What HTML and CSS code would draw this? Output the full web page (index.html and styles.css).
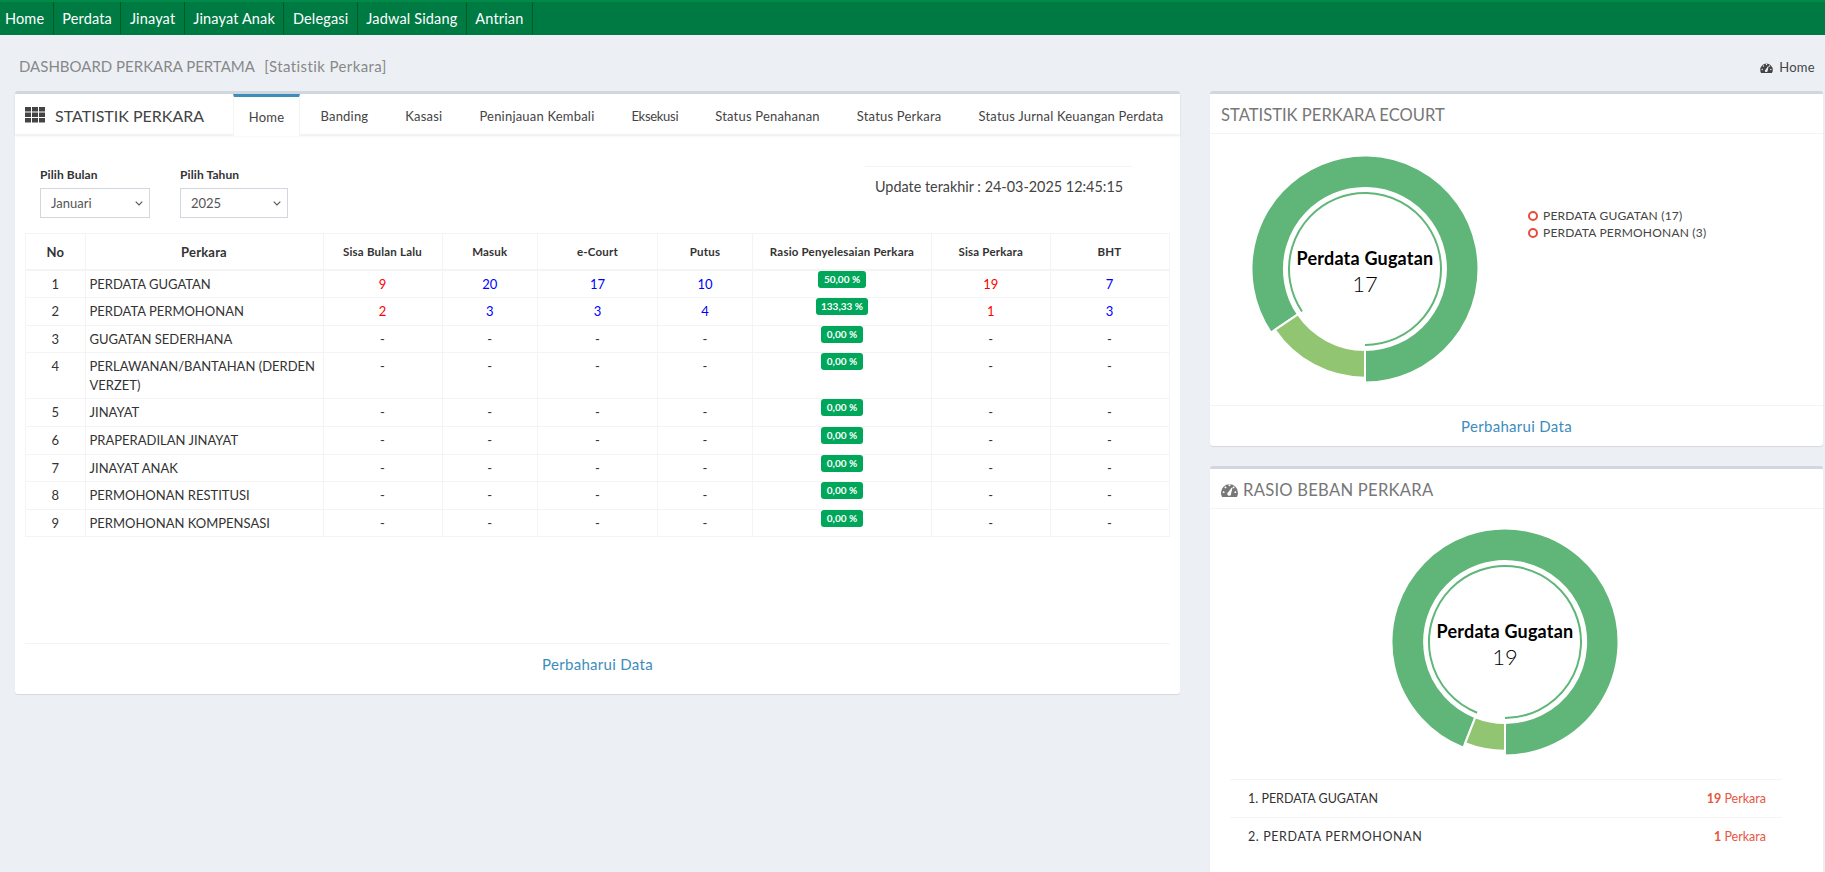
FILE: index.html
```html
<!DOCTYPE html>
<html lang="id">
<head>
<meta charset="utf-8">
<title>Dashboard Perkara Pertama</title>
<link rel="stylesheet" href="styles.css">
</head>
<body>
<nav class="topnav">
  <a class="nav-item nav-first">Home</a>
  <a class="nav-item">Perdata</a>
  <a class="nav-item">Jinayat</a>
  <a class="nav-item">Jinayat Anak</a>
  <a class="nav-item">Delegasi</a>
  <a class="nav-item">Jadwal Sidang</a>
  <a class="nav-item">Antrian</a>
</nav>
<header class="page-head">
  <h1 class="page-title">DASHBOARD PERKARA PERTAMA <span class="page-sub">[Statistik Perkara]</span></h1>
  <div class="crumb">
    <svg class="gauge-sm" viewBox="0 0 16 14"><path fill-rule="evenodd" d="M0 10a8 8 0 0 1 16 0c0 1.500-.4 2.800-1 4H1c-.6-1.200-1-2.500-1-4zM2.500 8.600a.9.9 0 1 0 0 1.800.9.900 0 0 0 0-1.800zM4.200 4.100a.9.9 0 1 0 0 1.800.9.900 0 0 0 0-1.800zM8 2.200a.9.9 0 1 0 0 1.800.9.900 0 0 0 0-1.800zM11.800 4.100a.9.9 0 1 0 0 1.800.9.900 0 0 0 0-1.800zM13.500 8.600a.9.9 0 1 0 0 1.800.9.900 0 0 0 0-1.800zM7 9.400a1.800 1.800 0 1 0 2.500 1.300l1.300-5.200-.9-.2z"/></svg>
    <span>Home</span>
  </div>
</header>
<main class="layout">
  <section class="panel panel-main">
    <div class="tabbar">
      <div class="tabbar-title">
        <svg class="th-icon" viewBox="0 0 20 15.500"><path d="M0 0h6v4.500H0zM7 0h6v4.500H7zM14 0h6v4.500h-6zM0 5.500h6V10H0zM7 5.500h6V10H7zM14 5.500h6V10h-6zM0 11h6v4.500H0zM7 11h6v4.500H7zM14 11h6v4.500h-6z"/></svg>
        <span>STATISTIK PERKARA</span>
      </div>
      <ul class="tabs">
        <li class="tab tab-active">Home</li>
        <li class="tab">Banding</li>
        <li class="tab">Kasasi</li>
        <li class="tab">Peninjauan Kembali</li>
        <li class="tab tab-tight">Eksekusi</li>
        <li class="tab">Status Penahanan</li>
        <li class="tab">Status Perkara</li>
        <li class="tab">Status Jurnal Keuangan Perdata</li>
      </ul>
    </div>
    <div class="panel-main-body">
      <div class="filters">
        <div class="filter filter-month">
          <label class="filter-label">Pilih Bulan</label>
          <select class="filter-select select-month"><option>Januari</option></select>
        </div>
        <div class="filter filter-year">
          <label class="filter-label">Pilih Tahun</label>
          <select class="filter-select select-year"><option>2025</option></select>
        </div>
        <div class="update">Update terakhir : 24-03-2025 12:45:15</div>
      </div>
      <table class="stats">
        <colgroup>
          <col class="c-no"><col class="c-name"><col class="c-a"><col class="c-b"><col class="c-c"><col class="c-d"><col class="c-e"><col class="c-f"><col class="c-g">
        </colgroup>
        <thead>
          <tr><th class="th-big">No</th><th class="th-big">Perkara</th><th>Sisa Bulan Lalu</th><th>Masuk</th><th>e-Court</th><th>Putus</th><th>Rasio Penyelesaian Perkara</th><th>Sisa Perkara</th><th>BHT</th></tr>
        </thead>
        <tbody>
          <tr><td>1</td><td class="name">PERDATA GUGATAN</td><td class="red">9</td><td class="blue">20</td><td class="blue">17</td><td class="blue">10</td><td><span class="badge">50,00 %</span></td><td class="red">19</td><td class="blue">7</td></tr>
          <tr><td>2</td><td class="name">PERDATA PERMOHONAN</td><td class="red">2</td><td class="blue">3</td><td class="blue">3</td><td class="blue">4</td><td><span class="badge">133,33 %</span></td><td class="red">1</td><td class="blue">3</td></tr>
          <tr><td>3</td><td class="name">GUGATAN SEDERHANA</td><td>-</td><td>-</td><td>-</td><td>-</td><td><span class="badge">0,00 %</span></td><td>-</td><td>-</td></tr>
          <tr><td>4</td><td class="name">PERLAWANAN/BANTAHAN (DERDEN VERZET)</td><td>-</td><td>-</td><td>-</td><td>-</td><td><span class="badge">0,00 %</span></td><td>-</td><td>-</td></tr>
          <tr><td>5</td><td class="name">JINAYAT</td><td>-</td><td>-</td><td>-</td><td>-</td><td><span class="badge">0,00 %</span></td><td>-</td><td>-</td></tr>
          <tr><td>6</td><td class="name">PRAPERADILAN JINAYAT</td><td>-</td><td>-</td><td>-</td><td>-</td><td><span class="badge">0,00 %</span></td><td>-</td><td>-</td></tr>
          <tr><td>7</td><td class="name">JINAYAT ANAK</td><td>-</td><td>-</td><td>-</td><td>-</td><td><span class="badge">0,00 %</span></td><td>-</td><td>-</td></tr>
          <tr><td>8</td><td class="name">PERMOHONAN RESTITUSI</td><td>-</td><td>-</td><td>-</td><td>-</td><td><span class="badge">0,00 %</span></td><td>-</td><td>-</td></tr>
          <tr><td>9</td><td class="name">PERMOHONAN KOMPENSASI</td><td>-</td><td>-</td><td>-</td><td>-</td><td><span class="badge">0,00 %</span></td><td>-</td><td>-</td></tr>
        </tbody>
      </table>
      <div class="main-footer"><a class="refresh">Perbaharui Data</a></div>
    </div>
  </section>
  <aside class="side">
    <section class="panel">
      <div class="side-head">STATISTIK PERKARA ECOURT</div>
      <div class="ecourt-body">
        <svg class="donut" viewBox="0 0 240 240">
          <path class="seg-main" d="M25.900 183.500A113.500 113.500 0 1 1 120 233.500L120 201A81 81 0 1 0 52.800 165.300Z"/>
          <path class="seg-light" d="M120 201L120 228.700A108.700 108.700 0 0 1 29.900 180.800L52.800 165.300A81 81 0 0 0 120 201Z"/>
          <path class="seg-hilite" d="M57 162.500A76 76 0 1 1 120 196"/>
          <text class="donut-label" x="120" y="115.500">Perdata Gugatan</text>
          <text class="donut-value" x="120" y="143">17</text>
        </svg>
        <ul class="legend">
          <li class="legend-item"><span class="legend-dot"></span>PERDATA GUGATAN (17)</li>
          <li class="legend-item"><span class="legend-dot"></span>PERDATA PERMOHONAN (3)</li>
        </ul>
      </div>
      <div class="side-foot"><a class="refresh">Perbaharui Data</a></div>
    </section>
    <section class="panel panel-ratio">
      <div class="side-head">
        <svg class="gauge-lg" viewBox="0 0 16 14"><path fill-rule="evenodd" d="M0 10a8 8 0 0 1 16 0c0 1.500-.4 2.800-1 4H1c-.6-1.200-1-2.500-1-4zM2.500 8.600a.9.9 0 1 0 0 1.800.9.900 0 0 0 0-1.800zM4.200 4.100a.9.9 0 1 0 0 1.800.9.900 0 0 0 0-1.800zM8 2.200a.9.9 0 1 0 0 1.800.9.900 0 0 0 0-1.800zM11.800 4.100a.9.9 0 1 0 0 1.800.9.900 0 0 0 0-1.800zM13.500 8.600a.9.9 0 1 0 0 1.800.9.900 0 0 0 0-1.800zM7 9.400a1.800 1.800 0 1 0 2.500 1.300l1.300-5.200-.9-.2z"/></svg>
        <span class="ratio-title">RASIO BEBAN PERKARA</span>
      </div>
      <div class="ratio-body">
        <svg class="donut donut-center" viewBox="0 0 240 240">
          <path class="seg-main" d="M78.400 225.600A113.500 113.500 0 1 1 120 233.500L120 201A81 81 0 1 0 90.300 195.300Z"/>
          <path class="seg-light" d="M120 201L120 228.700A108.700 108.700 0 0 1 80.200 221.100L90.300 195.300A81 81 0 0 0 120 201Z"/>
          <path class="seg-hilite" d="M92.100 190.700A76 76 0 1 1 120 196"/>
          <text class="donut-label" x="120" y="115.500">Perdata Gugatan</text>
          <text class="donut-value" x="120" y="143">19</text>
        </svg>
        <ul class="ratio-list">
          <li class="ratio-row"><span>1. PERDATA GUGATAN</span><span class="ratio-val"><b>19</b> Perkara</span></li>
          <li class="ratio-row"><span class="ratio-long">2. PERDATA PERMOHONAN</span><span class="ratio-val"><b>1</b> Perkara</span></li>
        </ul>
      </div>
    </section>
  </aside>
</main>
</body>
</html>
```
FILE: styles.css
```css
* { box-sizing: border-box; }
html, body { height: 872px; overflow: hidden; }
body {
  margin: 0;
  background: #ecf0f5;
  color: #333;
  font-family: Lato, "Open Sans", "Liberation Sans", sans-serif;
  font-size: 14px;
}
ul { list-style: none; margin: 0; padding: 0; }

.topnav {
  display: flex;
  height: 35px;
  background: #007a43;
  border-top: 2px solid #008a48;
  padding-bottom: 1px;
}
.nav-item {
  display: flex;
  align-items: center;
  padding: 0 8.500px;
  color: #fff;
  font-size: 14.500px;
  letter-spacing: .15px;
  border-right: 1px solid #005c1e;
}
.nav-first { padding-left: 5px; }

.page-head {
  display: flex;
  justify-content: space-between;
  align-items: center;
  height: 56px;
  padding: 6px 10px 0 19px;
}
.page-title {
  margin: 0;
  font-size: 15px;
  font-weight: 400;
  color: #888;
}
.page-sub { margin-left: 6px; letter-spacing: .4px; }
.crumb {
  display: flex;
  align-items: center;
  gap: 6px;
  padding-top: 2px;
  font-size: 13px;
  color: #444;
  letter-spacing: .3px;
}
.gauge-sm { width: 13px; height: 11px; fill: #444; }

.layout {
  display: flex;
  align-items: flex-start;
  gap: 30px;
  padding: 0 2px 0 15px;
}
.panel {
  background: #fff;
  border-top: 3px solid #d2d6de;
  border-radius: 3px;
  box-shadow: 0 1px 1px rgba(0,0,0,.1);
}
.panel-main { width: 1165px; height: 603px; }
.side { width: 613px; display: flex; flex-direction: column; gap: 20px; }

.tabbar {
  display: flex;
  height: 41px;
  border-bottom: 1px solid #f4f4f4;
  box-shadow: 0 1px 2px rgba(0,0,0,.08);
}
.tabbar-title {
  flex: none;
  width: 218px;
  display: flex;
  align-items: center;
  gap: 10px;
  padding: 2px 0 0 10px;
  font-size: 16px;
  color: #444;
}
.th-icon { width: 20px; height: 15.500px; fill: #444; }
.tabs { display: flex; }
.tab {
  display: flex;
  align-items: center;
  padding: 3px 18.500px 0;
  font-size: 13px;
  color: #444;
  letter-spacing: .2px;
  white-space: nowrap;
}
.tab-tight { letter-spacing: -.3px; }
.tab-active {
  flex: none;
  width: 67px;
  padding: 0;
  margin-right: 2px;
  justify-content: center;
  border-top: 3px solid #3c8dbc;
  border-left: 1px solid #f4f4f4;
  border-right: 1px solid #f4f4f4;
  height: 42px;
  background: #fff;
}

.panel-main-body { padding: 0 10px; }
.filters { display: flex; height: 98px; padding: 31px 0 0 15px; position: relative; }
.filter { display: flex; flex-direction: column; }
.filter-month { width: 140px; }
.filter-label { font-size: 12px; font-weight: 700; color: #333; line-height: 17px; margin-bottom: 5px; letter-spacing: .1px; }
.filter-select {
  appearance: none;
  height: 30px;
  background: #fff url("data:image/svg+xml,%3Csvg xmlns='http://www.w3.org/2000/svg' width='8' height='5'%3E%3Cpath d='M.7.7 4 4 7.300.7' fill='none' stroke='%23555' stroke-width='1.100'/%3E%3C/svg%3E") no-repeat right 6px center;
  border: 1px solid #d2d6de;
  border-radius: 0;
  color: #555;
  font-family: inherit;
  font-size: 13px;
  padding: 0 10px;
}
.select-month { width: 110px; }
.select-year { width: 108px; }
.update {
  position: absolute;
  left: 840px;
  top: 31px;
  width: 267px;
  height: 40px;
  border-top: 1px solid #f4f4f4;
  padding: 11px 0 0 10px;
  font-size: 14.400px;
  color: #444;
  white-space: nowrap;
}

.stats {
  width: 1143px;
  table-layout: fixed;
  border-collapse: collapse;
  border: 1px solid #f4f4f4;
  font-size: 13px;
  line-height: 1.42857;
}
.c-no { width: 59.500px; }
.c-name { width: 238px; }
.c-a { width: 119px; }
.c-b { width: 95.500px; }
.c-c { width: 120px; }
.c-d { width: 95px; }
.c-e { width: 179px; }
.c-f { width: 118.500px; }
.c-g { width: 119px; }
.stats th {
  padding: 9px 2px 7px;
  border: 1px solid #f4f4f4;
  border-bottom-width: 2px;
  font-size: 11.500px;
  font-weight: 700;
  color: #333;
  text-align: center;
  white-space: nowrap;
  letter-spacing: .2px;
}
.stats th.th-big { font-size: 13px; }
.stats td {
  padding: 4px;
  border: 1px solid #f4f4f4;
  text-align: center;
  vertical-align: top;
}
.stats td.name { text-align: left; }
.red { color: #f00; }
.blue { color: #00f; }
.badge {
  display: inline-block;
  vertical-align: top;
  margin-top: -4px;
  padding: 0 5.500px;
  height: 17px;
  line-height: 16px;
  border-radius: 3px;
  background: #00a65a;
  color: #fff;
  font-size: 10px;
  font-weight: 700;
}
.main-footer {
  margin-top: 106px;
  border-top: 1px solid #f4f4f4;
  height: 40px;
  display: flex;
  align-items: center;
  justify-content: center;
}
.refresh { color: #3c8dbc; font-size: 15px; letter-spacing: .3px; }

.side-head {
  display: flex;
  align-items: center;
  gap: 5px;
  height: 40px;
  padding: 2px 0 0 11px;
  border-bottom: 1px solid #f4f4f4;
  font-size: 16.600px;
  color: #777;
}
.ratio-title { letter-spacing: .25px; }
.gauge-lg { width: 17px; height: 15px; fill: #777; }
.ecourt-body {
  display: flex;
  align-items: flex-start;
  padding: 15px 0 16px 35px;
}
.donut { display: block; width: 240px; height: 240px; flex: none; }
.seg-main { fill: #5fb678; stroke: #fff; stroke-width: 2; }
.seg-light { fill: #91c572; stroke: #fff; stroke-width: 2; }
.seg-hilite { fill: none; stroke: #5fb678; stroke-width: 2; }
.donut-label { font-size: 18px; font-weight: 700; fill: #000; text-anchor: middle; letter-spacing: .2px; }
.donut-value { font-size: 22px; fill: #000; text-anchor: middle; font-weight: 300; }
.legend { margin: 58px 0 0 43px; font-size: 12px; color: #444; line-height: 17px; }
.legend-item { display: flex; align-items: center; gap: 5px; letter-spacing: .2px; }
.legend-dot { width: 10px; height: 10px; border: 2px solid #e74c3c; border-radius: 50%; }
.side-foot {
  border-top: 1px solid #f4f4f4;
  height: 41px;
  display: flex;
  align-items: center;
  justify-content: center;
}
.panel-ratio { height: 420px; }
.ratio-body { padding: 13px 41px 0 20px; }
.donut-center { margin: 0 0 0 155px; }
.ratio-list { margin-top: 17px; }
.ratio-row {
  display: flex;
  justify-content: space-between;
  align-items: center;
  height: 38px;
  padding: 0 16px 0 18px;
  border-top: 1px solid #f4f4f4;
  font-size: 12.500px;
  color: #333;
}
.ratio-long { letter-spacing: .6px; }
.ratio-val { color: #e8563f; }
```
